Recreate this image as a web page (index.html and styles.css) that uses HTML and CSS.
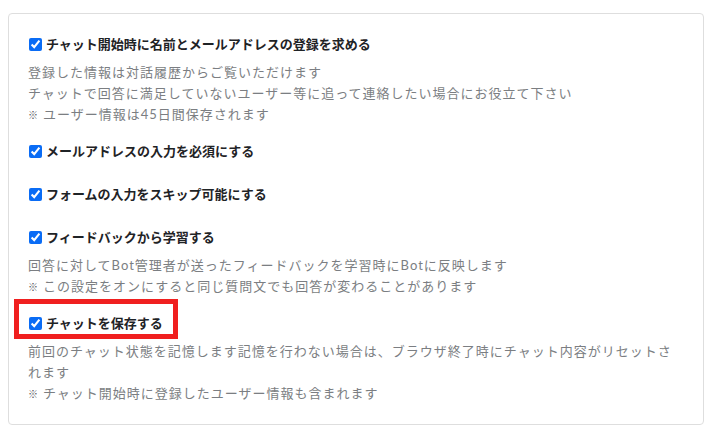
FILE: index.html
```html
<!DOCTYPE html>
<html lang="ja">
<head>
<meta charset="utf-8">
<link rel="stylesheet" href="styles.css">
</head>
<body>
<div class="card">
  <div class="group">
    <label class="check"><input type="checkbox" checked><span>チャット開始時に名前とメールアドレスの登録を求める</span></label>
    <div class="desc">
      <p>登録した情報は対話履歴からご覧いただけます</p>
      <p>チャットで回答に満足していないユーザー等に追って連絡したい場合にお役立て下さい</p>
      <p><span class="mark">※</span>ユーザー情報は45日間保存されます</p>
    </div>
  </div>
  <div class="group">
    <label class="check"><input type="checkbox" checked><span>メールアドレスの入力を必須にする</span></label>
  </div>
  <div class="group">
    <label class="check"><input type="checkbox" checked><span>フォームの入力をスキップ可能にする</span></label>
  </div>
  <div class="group">
    <label class="check"><input type="checkbox" checked><span>フィードバックから学習する</span></label>
    <div class="desc">
      <p>回答に対してBot管理者が送ったフィードバックを学習時にBotに反映します</p>
      <p><span class="mark">※</span>この設定をオンにすると同じ質問文でも回答が変わることがあります</p>
    </div>
  </div>
  <div class="group highlighted">
    <label class="check"><input type="checkbox" checked><span>チャットを保存する</span></label>
    <div class="desc">
      <p>前回のチャット状態を記憶します記憶を行わない場合は、ブラウザ終了時にチャット内容がリセットされます</p>
      <p><span class="mark">※</span>チャット開始時に登録したユーザー情報も含まれます</p>
    </div>
  </div>
</div>
</body>
</html>
```
FILE: styles.css
```css
html, body {
  margin: 0;
  padding: 0;
  background: #ffffff;
}
body {
  padding: 13px 9px 0 8px;
  font-family: "Lato", "Noto Sans CJK JP", sans-serif;
}
.card {
  border: 1px solid #dedede;
  border-radius: 4px;
  padding: 20px 19px 19px 19px;
  display: flex;
  flex-direction: column;
  gap: 15px;
}
.group {
  position: relative;
}
.check {
  display: flex;
  align-items: center;
  gap: 4px;
  height: 20px;
  margin-bottom: 8px;
  font-size: 13px;
  font-weight: 700;
  color: #1f2326;
  line-height: 20px;
}
.check input {
  width: 13px;
  height: 13px;
  margin: 0 0 0 1px;
  accent-color: #0a6cf5;
}
.desc {
  font-size: 13px;
  letter-spacing: 1px;
  color: #7b7e82;
  line-height: 21px;
}
.desc p {
  margin: 0;
}
.mark {
  font-size: 10px;
  letter-spacing: 0;
  margin-right: 5px;
  color: #55595d;
}
.highlighted::before {
  content: "";
  position: absolute;
  left: -14px;
  top: -14px;
  width: 154px;
  height: 30px;
  border: 5px solid #f01f1f;
  pointer-events: none;
}
```
